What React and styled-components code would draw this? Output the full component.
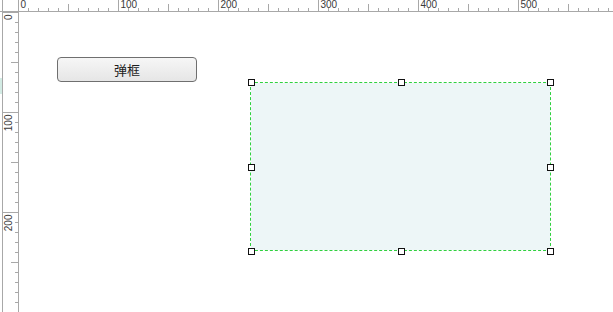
import React from 'react'
import styled, { createGlobalStyle } from 'styled-components'

const GlobalStyle = createGlobalStyle`
  html, body { margin: 0; padding: 0; background: #fff; }
  body { font-family: "Liberation Sans", Arial, sans-serif; }
`

const ORIGIN_X = 19
const ORIGIN_Y = 12
const RULER_COLOR = '#a8a8a8'
const DASH = '#2fd13f'

const Frame = styled.div`
  display: grid;
  grid-template-columns: ${ORIGIN_X}px 1fr;
  grid-template-rows: ${ORIGIN_Y}px 1fr;
  width: 613px;
  height: 312px;
  overflow: hidden;
  background: #fff;
`

const TopRuler = styled.svg`
  grid-column: 1 / span 2;
  display: block;
`

const SideRuler = styled.svg`
  display: block;
`

const Canvas = styled.div`
  position: relative;
  background: #fff;
`

const Widget = styled.button`
  position: absolute;
  left: ${p => p.$x}px;
  top: ${p => p.$y}px;
  width: ${p => p.$w}px;
  height: ${p => p.$h}px;
  box-sizing: border-box;
  border: 1px solid #6f6f6f;
  border-radius: 4px;
  background: linear-gradient(#f6f6f6, #e6e6e6);
  font-family: "Noto Sans CJK SC", "Liberation Sans", sans-serif;
  font-size: 13px;
  color: #1e1e1e;
  padding: 0;
`

const Selection = styled.div`
  position: absolute;
  left: ${p => p.$x}px;
  top: ${p => p.$y}px;
  width: ${p => p.$w}px;
  height: ${p => p.$h}px;
  box-sizing: border-box;
  border: 1px dashed ${DASH};
  background: #edf6f7;
  background-clip: padding-box;
`

const Handle = styled.span`
  position: absolute;
  left: ${p => p.$x}px;
  top: ${p => p.$y}px;
  width: 7px;
  height: 7px;
  box-sizing: border-box;
  border: 1px solid #111;
  background: #fff;
  transform: translate(-3px, -3px);
`

const Label = styled.text`
  font-family: "Liberation Sans", Arial, sans-serif;
  font-size: 10px;
  fill: #3a3a3a;
`

const range = n => Array.from({ length: n }, (_, i) => i)

const Horizontal = () => (
  <TopRuler width="613" height={ORIGIN_Y}>
    <line x1="0" y1="11.5" x2="613" y2="11.5" stroke={RULER_COLOR} />
    <line x1="2.5" y1="0" x2="2.5" y2="12" stroke={RULER_COLOR} />
    {range(60).map(i => {
      const x = ORIGIN_X + i * 10 - 0.5
      const top = i % 10 === 0 ? 0 : i % 5 === 0 ? 4 : 8
      return (
        <g key={i}>
          <line x1={x} y1={top} x2={x} y2="12" stroke={RULER_COLOR} />
          {i % 10 === 0 && <Label x={x + 2} y="8">{i * 10}</Label>}
        </g>
      )
    })}
  </TopRuler>
)

const Vertical = () => (
  <SideRuler width={ORIGIN_X} height="300">
    <rect x="0" y={78 - ORIGIN_Y} width="3" height="16" fill="#d3ebe4" />
    <line x1="2.5" y1="0" x2="2.5" y2="300" stroke={RULER_COLOR} />
    <line x1="18.5" y1="0" x2="18.5" y2="300" stroke={RULER_COLOR} />
    {range(30).map(i => {
      const y = i * 10 + 0.5
      const left = i % 10 === 0 ? 3 : i % 5 === 0 ? 11 : 15
      return (
        <g key={i}>
          <line x1={left} y1={y} x2="19" y2={y} stroke={RULER_COLOR} />
          {i % 10 === 0 && (
            <Label
              x="0"
              y="0"
              textAnchor="end"
              transform={`translate(12 ${y + 2}) rotate(-90)`}
            >
              {i * 10}
            </Label>
          )}
        </g>
      )
    })}
  </SideRuler>
)

// page coords of the selected box, shifted into the canvas
const box = { x: 250 - ORIGIN_X, y: 82 - ORIGIN_Y, w: 301, h: 169 }

// handle centres, page coords
const handles = () => {
  const xs = [251, 401, 550]
  const ys = [82, 167, 251]
  const out = []
  ys.forEach((y, r) =>
    xs.forEach((x, c) => {
      if (r === 1 && c === 1) return
      out.push({ x: x - ORIGIN_X, y: y - ORIGIN_Y, key: `${r}-${c}` })
    })
  )
  return out
}

export default function App() {
  return (
    <>
      <GlobalStyle />
      <Frame>
        <Horizontal />
        <Vertical />
        <Canvas>
          <Widget $x={57 - ORIGIN_X} $y={57 - ORIGIN_Y} $w={140} $h={25}>
            弹框
          </Widget>
          <Selection $x={box.x} $y={box.y} $w={box.w} $h={box.h} />
          {handles().map(h => (
            <Handle key={h.key} $x={h.x} $y={h.y} />
          ))}
        </Canvas>
      </Frame>
    </>
  )
}
